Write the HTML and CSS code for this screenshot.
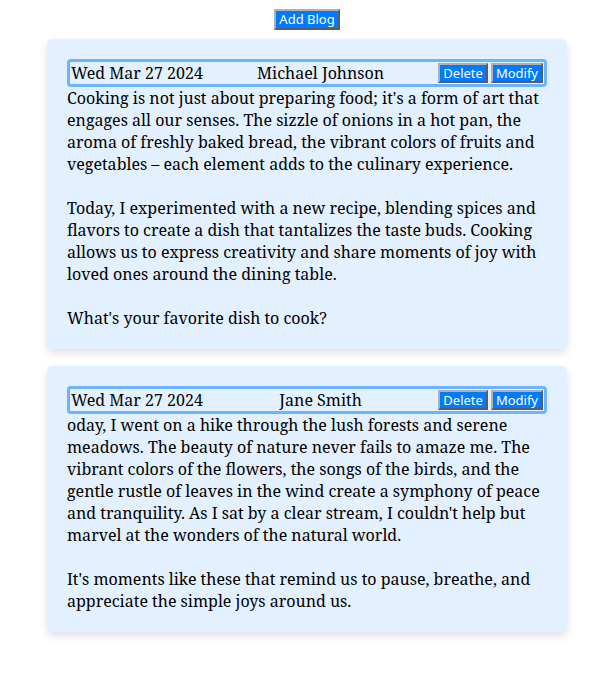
FILE: index.html
```html
<!DOCTYPE html>
<html>
<head>
<meta charset="utf-8">
<link rel="stylesheet" href="styles.css">
</head>
<body>
<div class="top"><button class="add-btn">Add Blog</button></div>
<div class="list">
  <div class="card">
    <div class="head">
      <span class="date">Wed Mar 27 2024</span>
      <span class="author">Michael Johnson</span>
      <span class="actions"><button class="btn">Delete</button><button class="btn">Modify</button></span>
    </div>
    <div class="body">Cooking is not just about preparing food; it's a form of art that engages all our senses. The sizzle of onions in a hot pan, the aroma of freshly baked bread, the vibrant colors of fruits and vegetables – each element adds to the culinary experience.

Today, I experimented with a new recipe, blending spices and flavors to create a dish that tantalizes the taste buds. Cooking allows us to express creativity and share moments of joy with loved ones around the dining table.

What's your favorite dish to cook?</div>
  </div>
  <div class="card">
    <div class="head">
      <span class="date">Wed Mar 27 2024</span>
      <span class="author">Jane Smith</span>
      <span class="actions"><button class="btn">Delete</button><button class="btn">Modify</button></span>
    </div>
    <div class="body">oday, I went on a hike through the lush forests and serene meadows. The beauty of nature never fails to amaze me. The vibrant colors of the flowers, the songs of the birds, and the gentle rustle of leaves in the wind create a symphony of peace and tranquility. As I sat by a clear stream, I couldn't help but marvel at the wonders of the natural world.

It's moments like these that remind us to pause, breathe, and appreciate the simple joys around us.</div>
  </div>
</div>
</body>
</html>
```
FILE: styles.css
```css
body {
  margin: 8px 8px 8px 7px;
  font-family: "Noto Serif", "DejaVu Serif", serif;
  font-size: 16px;
  color: #000;
  background: #fff;
}
.top {
  display: flex;
  justify-content: center;
}
.add-btn, .btn {
  box-sizing: border-box;
  background: #007bff;
  color: #fff;
  font-family: "Noto Sans", "DejaVu Sans", sans-serif;
  font-size: 13px;
  border: 2px outset #b0b0b0;
  padding: 0 3px;
  margin: 1px 0;
  line-height: 15px;
}
.add-btn {
  height: 21px;
  padding: 0 3.5px;
}
.btn {
  height: 20px;
}
.list {
  display: flex;
  flex-direction: column;
  align-items: center;
  gap: 17px;
  margin-top: 8px;
  padding-bottom: 20px;
}
.card {
  width: 480px;
  padding: 20px;
  background: #e3f0ff;
  border-radius: 5px;
  box-shadow: 0 4px 8px rgba(0, 0, 0, 0.12);
}
.head {
  display: flex;
  justify-content: space-between;
  align-items: center;
  border: 3px solid #6cb4ff;
  border-radius: 4px;
  padding: 0 1px;
  line-height: 21px;
}
.actions {
  display: flex;
  gap: 3px;
}
.body {
  white-space: pre-line;
  line-height: 22px;
}
```
